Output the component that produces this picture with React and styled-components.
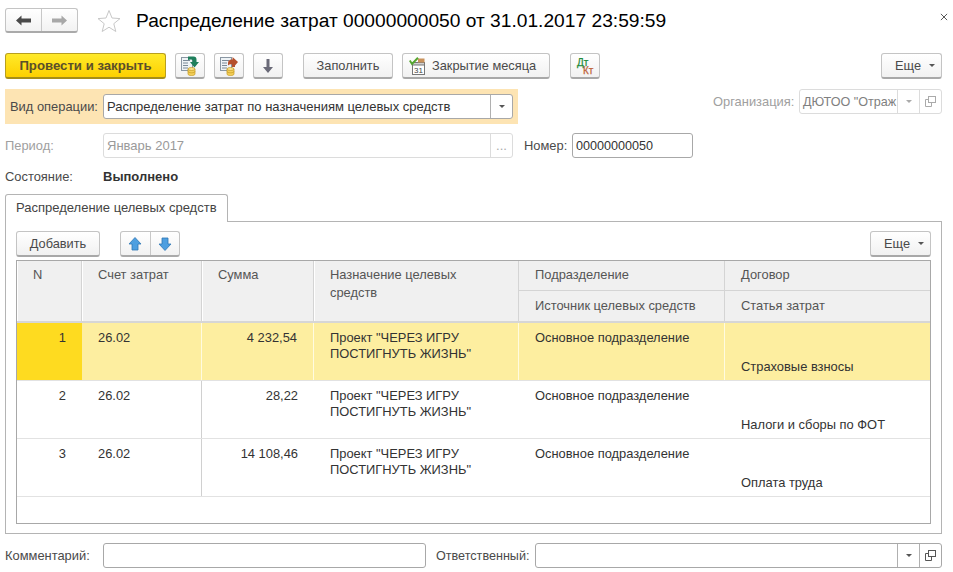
import React from 'react';
import styled, { createGlobalStyle } from 'styled-components';

const Global = createGlobalStyle`
  html, body { margin: 0; padding: 0; background: #fff; }
  body { font-family: "Liberation Sans", Arial, sans-serif; font-size: 13px; color: #4a4a4a; }
`;

const Page = styled.div`
  width: 953px; height: 572px; overflow: hidden; box-sizing: border-box;
  padding: 7px 11px 0 5px; display: flex; flex-direction: column; position: relative;
`;
const Header = styled.div`display: flex; align-items: center; height: 27px;`;
const NavGroup = styled.div`
  display: flex; width: 73px; height: 25px; box-sizing: border-box;
  border: 1px solid #c4c4c4; border-bottom: 2px solid #aaa; border-radius: 3px;
  background: linear-gradient(#fff, #f2f2f2);
`;
const NavBtn = styled.div`
  flex: 1; display: flex; align-items: center; justify-content: center;
  & + & { border-left: 1px solid #c8c8c8; }
`;
const Star = styled.svg`margin-left: 18px; width: 26px; height: 26px;`;
const Title = styled.div`
  margin-left: 14px; font-size: 19.200px; color: #000; white-space: nowrap; line-height: 26px;
`;
const Close = styled.svg`position: absolute; right: 5px; top: 13px; width: 8px; height: 8px;`;

const Toolbar = styled.div`display: flex; align-items: flex-start; margin-top: 19px; height: 26px;`;
const Btn = styled.div`
  display: flex; align-items: center; justify-content: ${p => p.$center ? 'center' : 'flex-start'};
  box-sizing: border-box; height: ${p => p.$h || 26}px; width: ${p => p.$w}px;
  margin-left: ${p => p.$ml || 0}px; flex: none;
  border: 1px solid #c4c4c4; border-bottom: 2px solid #a8a8a8; border-radius: 3px;
  background: linear-gradient(#fff, #f1f1f1); color: #4a4a4a; white-space: nowrap; font-size: 12.800px;
`;
const Primary = styled.div`
  display: flex; align-items: center; justify-content: center; box-sizing: border-box;
  width: 161px; height: 26px; border: 1px solid #b89f1e; border-bottom: 2px solid #a58e18; border-radius: 3px;
  background: linear-gradient(#ffea2a, #fdd000); color: #5a4f2a; font-weight: bold; font-size: 13.200px;
`;
const Spacer = styled.div`flex: 1;`;
const Caret = styled.span`
  display: inline-block; width: 0; height: 0; border-left: 3px solid transparent; border-right: 3px solid transparent;
  border-top: 3px solid ${p => p.$c || '#555'};
`;
const MoreBtn = styled(Btn)`padding-left: 13px; gap: 8px;`;
const MonthBtn = styled(Btn)`padding-left: 6px; gap: 7px;`;

const FieldRow = styled.div`display: flex; align-items: flex-start; margin-top: ${p => p.$mt || 0}px; height: ${p => p.$h || 25}px;`;
const Highlight = styled.div`
  display: flex; align-items: center; box-sizing: border-box; width: 513px; height: 35px;
  background: #fde4b3; padding: 0 5px; flex: none;
`;
const Label = styled.div`
  color: ${p => p.$off ? '#a0a0a0' : '#4a4a4a'}; font-size: ${p => p.$fs || 12.9}px; white-space: nowrap; line-height: 26px;
  width: ${p => p.$w ? p.$w + 'px' : 'auto'}; margin-left: ${p => p.$ml || 0}px; flex: none;
`;
const Input = styled.div`
  display: flex; box-sizing: border-box; height: ${p => p.$h || 25}px; width: ${p => p.$w}px; flex: none;
  margin-left: ${p => p.$ml || 0}px; background: #fff; border-radius: 3px;
  border: 1px solid ${p => p.$off ? '#dcdcdc' : '#a8a8a8'};
`;
const InputText = styled.div`
  flex: 1; min-width: 0; overflow: hidden; white-space: nowrap; padding-left: 3px; line-height: 24px;
  font-size: ${p => p.$fs || 13}px; color: ${p => p.$c || '#333'};
`;
const InputBtn = styled.div`
  width: ${p => p.$w || 21}px; flex: none; display: flex; align-items: center; justify-content: center;
  border-left: 1px solid ${p => p.$off ? '#dcdcdc' : '#b0b0b0'}; color: #aaa;
`;
const StatusRow = styled.div`display: flex; margin-top: 9px; height: 18px; align-items: center;`;
const StatusLabel = styled.div`width: 98px; font-size: 12.900px;`;
const StatusValue = styled.div`font-weight: bold; font-size: 13px; color: #333;`;

const TabBar = styled.div`display: flex; margin-top: 9px; height: 28px; position: relative; z-index: 1;`;
const Tab = styled.div`
  width: 223px; box-sizing: border-box; height: 28px; background: #fff;
  border: 1px solid #b4b4b4; border-bottom: 0; border-radius: 3px 3px 0 0;
  padding-left: 10px; line-height: 26px; color: #444; font-size: 13px;
`;
const Panel = styled.div`
  box-sizing: border-box; margin-top: -1px; height: 313px; border: 1px solid #b4b4b4; padding: 9px 10px;
  display: flex; flex-direction: column;
`;
const PanelBar = styled.div`display: flex; height: 26px; align-items: flex-start;`;
const ArrowGroup = styled(NavGroup)`width: 60px; height: 26px; margin-left: 20px;`;

const Table = styled.div`
  margin-top: 3px; height: 264px; box-sizing: border-box; border: 1px solid #a8a8a8;
  display: flex; flex-direction: column;
`;
const Row = styled.div`
  display: grid; grid-template-columns: 65px 120px 112px 205px 206px 1fr; height: ${p => p.$h}px; box-sizing: border-box;
  border-bottom: ${p => p.$hd ? '2px solid #d6d6d6' : '1px solid #e2e2e2'};
  background: ${p => p.$bg || '#fff'}; flex: none;
`;
const HCell = styled.div`
  box-sizing: border-box; padding: 5px 30px 0 15px; background: #f0f0f0; border-right: 1px solid #d4d4d4;
  font-size: 12.900px; line-height: 18px; color: #555; border-left: 1px solid #fff;
`;
const HStack = styled.div`display: flex; flex-direction: column; border-right: 1px solid #d4d4d4; &:last-child { border-right: 0; }`;
const HSub = styled.div`
  flex: 1; box-sizing: border-box; padding: 5px 0 0 16px; background: #f0f0f0; font-size: 12.900px; line-height: 18px; color: #555;
  white-space: nowrap; & + & { border-top: 1px solid #d4d4d4; padding-top: 6px; }
`;
const Cell = styled.div`
  box-sizing: border-box; padding: 7px 16px 0 16px; font-size: 12.900px; line-height: 16px; color: #333;
  text-align: ${p => p.$right ? 'right' : 'left'};
  background: ${p => p.$bg || 'transparent'};
  border-right: ${p => p.$line ? `1px solid ${p.$line}` : 0};
`;
const Stack = styled.div`display: flex; flex-direction: column; border-right: ${p => p.$line ? `1px solid ${p.$line}` : 0};`;
const Sub = styled.div`
  flex: 1; box-sizing: border-box; padding: 7px 0 0 16px; font-size: 12.900px; line-height: 16px; color: #333; white-space: nowrap;
  & + & { border-top: ${p => p.$sel ? '1px solid #fffbe0' : '0'}; padding-top: ${p => p.$sel ? 8 : 7}px; }
`;
const Footer = styled.div`display: flex; margin-top: 9px; height: 25px;`;

const DocIcon = ({ color, up }) => (
  <svg width="20" height="20" viewBox="0 0 20 20">
    <rect x="1.500" y="1.500" width="11" height="13" fill="#eef3f6" stroke="#8a97a3" />
    <path d="M3 4.500h7M3 7h5M3 9.500h5M3 12h5" stroke="#7a8a98" strokeWidth="1" />
    <path d="M8 13v5c0 1 1.600 1.500 3.500 1.500s3.500-.5 3.500-1.500v-5z" fill="#f4d05a" stroke="#c49a20" strokeWidth=".7" />
    <ellipse cx="11.500" cy="13" rx="3.500" ry="1.500" fill="#f8e08a" stroke="#c49a20" strokeWidth=".7" />
    <path d="M8 15.500c0 .8 1.600 1.300 3.500 1.300s3.500-.5 3.500-1.300" fill="none" stroke="#c49a20" strokeWidth=".7" />
    {up
      ? <path d="M9 7c0-2 1.500-3.500 3.500-3.500h1V1L19 6l-3 3.500V11h-3V8.500c-1.500-.5-3 0-4 1z" fill={color} />
      : <path d="M8 .5h5.500c2 0 3 1 3 3V6H19l-4.500 5.500L10 6h2.500V4.500C12.500 3.500 10 3 8 4z" fill={color} />}
  </svg>
);

const Arrow = ({ color, flip }) => (
  <svg width="15" height="11" viewBox="0 0 15 11" style={flip ? { transform: 'scaleX(-1)' } : undefined}>
    <path d="M0 5.500L5.500 .5V3.500H15V7.500H5.500V10.500Z" fill={color} />
  </svg>
);
const BlueArrow = ({ down }) => (
  <svg width="14" height="14" viewBox="0 0 14 14" style={down ? { transform: 'scaleY(-1)' } : undefined}>
    <path d="M7 .5L13 7H10V13H4V7H1Z" fill="#4e9fe0" stroke="#2f77b5" strokeWidth=".8" />
  </svg>
);
const Copy = ({ c = '#555' }) => (
  <svg width="11" height="11" viewBox="0 0 11 11" fill="none" stroke={c}>
    <rect x="3.500" y=".5" width="7" height="6" />
    <path d="M3.500 3.500H.5V10.500H6.500V6.500" />
  </svg>
);

export default function App() {
  return (
    <Page>
      <Global />
      <Header>
        <NavGroup>
          <NavBtn><Arrow color="#4a4a4a" /></NavBtn>
          <NavBtn><Arrow color="#a8a8a8" flip /></NavBtn>
        </NavGroup>
        <Star viewBox="0 0 26 26">
          <path d="M13 2.500l3 7.500 8 .6-6.200 5.100 2 7.800L13 19.200 6.200 23.500l2-7.800L2 10.600l8-.6z" fill="#fff" stroke="#c8c8c8" strokeWidth="1" />
        </Star>
        <Title>Распределение затрат 00000000050 от 31.01.2017 23:59:59</Title>
      </Header>
      <Close viewBox="0 0 9 9"><path d="M1 1l7 7M8 1l-7 7" stroke="#555" strokeWidth="1.100" /></Close>

      <Toolbar>
        <Primary>Провести и закрыть</Primary>
        <Btn $w={30} $ml={9} $center><DocIcon color="#1f7f5c" /></Btn>
        <Btn $w={30} $ml={9} $center><DocIcon color="#b5502c" up /></Btn>
        <Btn $w={30} $ml={9} $center>
          <svg width="12" height="16" viewBox="0 0 12 16"><path d="M4.500 1h3v8H11L6 15 1 9h3.500z" fill="#6a6a78" /></svg>
        </Btn>
        <Btn $w={90} $ml={20} $center>Заполнить</Btn>
        <MonthBtn $w={148} $ml={9}>
          <svg width="16" height="18" viewBox="0 0 16 18">
            <rect x="3.500" y="5.500" width="12" height="12" fill="#fff" stroke="#777" />
            <rect x="3.500" y="5.500" width="12" height="2.500" fill="#d0d0d0" stroke="#777" />
            <path d="M9 1.500h6.500v4H9z" fill="#c9925c" />
            <path d="M.8 3.500L3 7 9 .8" fill="none" stroke="#55a630" strokeWidth="2" />
            <text x="5" y="16" fontSize="8" fontFamily="Liberation Sans" fill="#444">31</text>
          </svg>
          Закрытие месяца
        </MonthBtn>
        <Btn $w={30} $ml={20} $center>
          <svg width="20" height="18" viewBox="0 0 20 18">
            <text x="2" y="9" fontSize="10" fontFamily="Liberation Sans" fill="#1f8a3a" stroke="#1f8a3a" strokeWidth=".25">Дт</text>
            <text x="8" y="17" fontSize="10" fontFamily="Liberation Sans" fill="#c0643a" stroke="#c0643a" strokeWidth=".25">Кт</text>
          </svg>
        </Btn>
        <Spacer />
        <MoreBtn $w={61}>Еще <Caret /></MoreBtn>
      </Toolbar>

      <FieldRow $mt={10} $h={35}>
        <Highlight>
          <Label $w={93}>Вид операции:</Label>
          <Input $w={410}>
            <InputText>Распределение затрат по назначениям целевых средств</InputText>
            <InputBtn><Caret /></InputBtn>
          </Input>
        </Highlight>
        <Label $off $ml={195} $w={81}>Организация:</Label>
        <Input $off $w={143} $ml={5}>
          <InputText $c="#808080" $fs={12.6}>ДЮТОО "Отраж</InputText>
          <InputBtn $off><Caret $c="#aaa" /></InputBtn>
          <InputBtn $off><Copy c="#aaa" /></InputBtn>
        </Input>
      </FieldRow>

      <FieldRow $mt={9}>
        <Label $off $w={98}>Период:</Label>
        <Input $off $w={410}>
          <InputText $c="#9a9a9a">Январь 2017</InputText>
          <InputBtn $off>...</InputBtn>
        </Input>
        <Label $ml={11} $w={43}>Номер:</Label>
        <Input $w={121} $ml={5}><InputText $fs={12.6}>00000000050</InputText></Input>
      </FieldRow>

      <StatusRow>
        <StatusLabel>Состояние:</StatusLabel>
        <StatusValue>Выполнено</StatusValue>
      </StatusRow>

      <TabBar><Tab>Распределение целевых средств</Tab></TabBar>
      <Panel>
        <PanelBar>
          <Btn $w={84} $center>Добавить</Btn>
          <ArrowGroup>
            <NavBtn><BlueArrow /></NavBtn>
            <NavBtn><BlueArrow down /></NavBtn>
          </ArrowGroup>
          <Spacer />
          <MoreBtn $w={61}>Еще <Caret /></MoreBtn>
        </PanelBar>
        <Table>
          <Row $h={62} $hd>
            <HCell>N</HCell>
            <HCell>Счет затрат</HCell>
            <HCell>Сумма</HCell>
            <HCell>Назначение целевых средств</HCell>
            <HStack><HSub>Подразделение</HSub><HSub>Источник целевых средств</HSub></HStack>
            <HStack><HSub>Договор</HSub><HSub>Статья затрат</HSub></HStack>
          </Row>
          {[
            ['1', '4 232,54', 'Страховые взносы', true],
            ['2', '28,22', 'Налоги и сборы по ФОТ'],
            ['3', '14 108,46', 'Оплата труда'],
          ].map(([n, sum, art, sel]) => {
            const line = sel ? '#fffbe0' : undefined;
            return (
              <Row key={n} $h={58} $bg={sel ? '#fdeea0' : '#fff'}>
                <Cell $right $bg={sel ? '#fedb20' : undefined}>{n}</Cell>
                <Cell $line={line || '#d0d0d0'}>26.02</Cell>
                <Cell $right $line={line}>{sum}</Cell>
                <Cell $line={line}>Проект "ЧЕРЕЗ ИГРУ ПОСТИГНУТЬ ЖИЗНЬ"</Cell>
                <Stack $line={line}><Sub $sel={sel}>Основное подразделение</Sub><Sub $sel={sel} /></Stack>
                <Stack><Sub $sel={sel} /><Sub $sel={sel}>{art}</Sub></Stack>
              </Row>
            );
          })}
        </Table>
      </Panel>

      <Footer>
        <Label $w={98}>Комментарий:</Label>
        <Input $w={323} />
        <Label $ml={10} $w={94} $fs={12.6}>Ответственный:</Label>
        <Input $w={407} $ml={5}>
          <InputText />
          <InputBtn><Caret /></InputBtn>
          <InputBtn><Copy /></InputBtn>
        </Input>
      </Footer>
    </Page>
  );
}
